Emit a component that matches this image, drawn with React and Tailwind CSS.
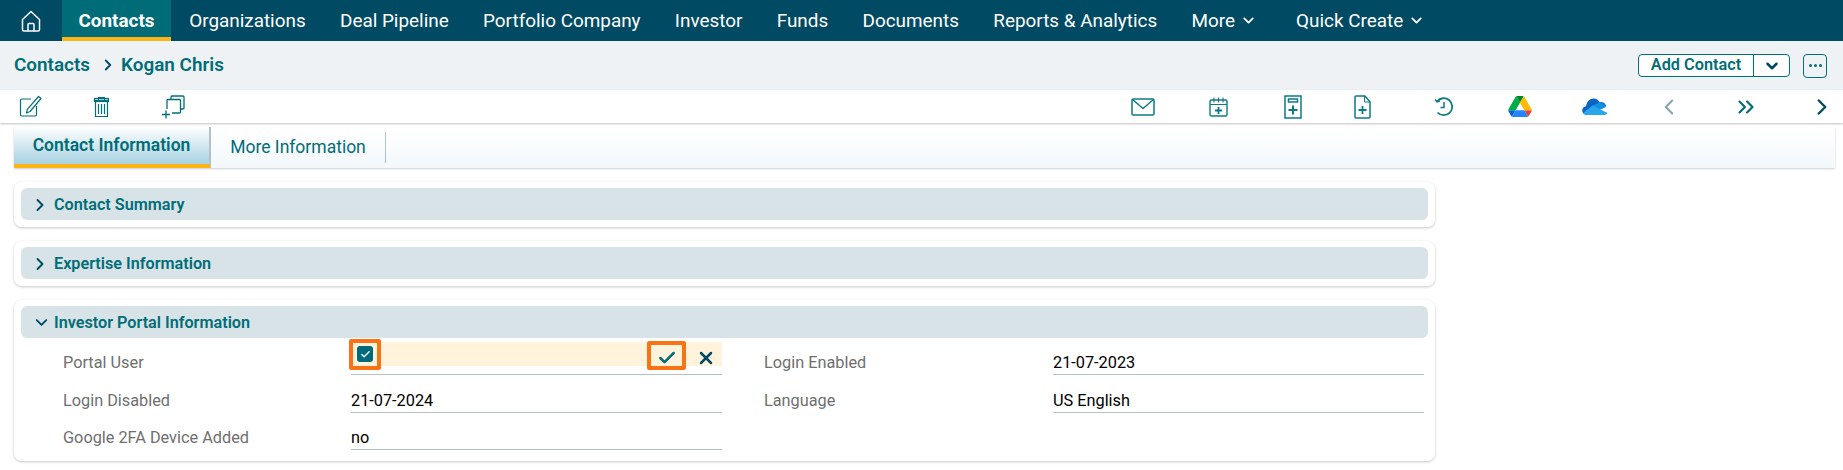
import { ChevronDown, ChevronRight, ChevronLeft, ChevronsRight, Check, X } from "lucide-react";

const navItems = ["Organizations", "Deal Pipeline", "Portfolio Company", "Investor", "Funds", "Documents", "Reports & Analytics"];

const HomeIcon = () => (
  <svg width="22" height="24" viewBox="0 0 22 24" fill="none" stroke="white" strokeWidth="1.5" strokeLinejoin="round">
    <path d="M11 2.5 2.5 10.5V20.5a1.5 1.5 0 0 0 1.5 1.5h14a1.5 1.5 0 0 0 1.5-1.5V10.5Z" />
    <path d="M8 22v-6.5a1 1 0 0 1 1-1h4a1 1 0 0 1 1 1V22" />
  </svg>
);

const EditIcon = () => (
  <svg width="23" height="23" viewBox="0 0 23 23" fill="none" stroke="#00707a" strokeWidth="1.2" strokeLinejoin="round">
    <path d="M12 4H3a1.5 1.5 0 0 0-1.5 1.5v14A1.5 1.5 0 0 0 3 21h13a1.5 1.5 0 0 0 1.5-1.5V11" />
    <path d="M19.5 1.5 22 3.5 11 16.5l-3.5 1.5.8-3.6Z" />
  </svg>
);

const TrashIcon = () => (
  <svg width="17" height="22" viewBox="0 0 17 22" fill="none" stroke="#00707a" strokeWidth="1.2">
    <path d="M1 4.5h15M5.5 4.5V1.5h6v3" />
    <rect x="1.5" y="2.5" width="14" height="3" fill="#00707a" fillOpacity=".25" />
    <path d="M2.5 5.5V20.5H14.5V5.5" />
    <path d="M5.5 8v10M8.5 8v10M11.5 8v10" />
  </svg>
);

const CopyIcon = () => (
  <svg width="24" height="24" viewBox="0 0 24 24" fill="none" stroke="#00707a" strokeWidth="1.3">
    <path d="M10 4.500V2a1 1 0 0 1 1-1h11a1 1 0 0 1 1 1v11a1 1 0 0 1-1 1h-2.500" />
    <path d="M6 14V5.500a1 1 0 0 1 1-1h11.500a1 1 0 0 1 1 1V17a1 1 0 0 1-1 1H11" />
    <path d="M5 15.500v8M1 19.500h8" />
  </svg>
);

const MailIcon = () => (
  <svg width="24" height="18" viewBox="0 0 24 18" fill="none" stroke="#0d7a85" strokeWidth="1.5" strokeLinejoin="round">
    <rect x="1" y="1" width="22" height="16" rx="1.2" />
    <path d="m1.500 1.500 10.500 9 10.500-9" />
  </svg>
);

const CalendarIcon = () => (
  <svg width="19" height="20" viewBox="0 0 19 20" fill="none" stroke="#0d7a85" strokeWidth="1.4">
    <rect x="1" y="3" width="17" height="16" rx="1.5" />
    <path d="M1 7.500h17M5 .5v5M9.500 .5v5M14 .5v5" strokeWidth="1.100" />
    <path d="M9.500 10v7M6 13.500h7" strokeWidth="1.800" />
  </svg>
);

const FormIcon = () => (
  <svg width="18" height="24" viewBox="0 0 18 24" fill="none" stroke="#0d7a85" strokeWidth="1.500">
    <rect x="1" y="1" width="16" height="22" />
    <rect x="4.500" y="4" width="9" height="3" />
    <path d="M9 10.500v9M4.500 15h9" strokeWidth="2" />
  </svg>
);

const FilePlusIcon = () => (
  <svg width="17" height="24" viewBox="0 0 17 24" fill="none" stroke="#0d7a85" strokeWidth="1.500" strokeLinejoin="round">
    <path d="M2 1h9l5 6v15a1 1 0 0 1-1 1H2a1 1 0 0 1-1-1V2a1 1 0 0 1 1-1Z" />
    <path d="M10.500 1v6H16" strokeWidth="1" />
    <path d="M8.500 11v8M4.500 15h8" strokeWidth="1.800" />
  </svg>
);

const HistoryIcon = () => (
  <svg width="20" height="20" viewBox="0 0 20 20" fill="none" stroke="#0d7a85" strokeWidth="1.800">
    <path d="M3 4.500A8.500 8.500 0 1 1 3.500 15.500" />
    <path d="M1 2.500 3 5l3-1" strokeWidth="1.400" />
    <path d="M10 5v5.500H6.500" strokeWidth="1.500" />
  </svg>
);

const DriveIcon = () => (
  <svg width="24" height="21" viewBox="0 0 87.300 78">
    <path d="m6.600 66.850 3.850 6.650c.8 1.400 1.950 2.500 3.300 3.300l13.750-23.800h-27.500c0 1.550.4 3.100 1.200 4.500z" fill="#0066da" />
    <path d="m43.650 25-13.750-23.800c-1.350.8-2.500 1.900-3.300 3.300l-25.400 44a9.060 9.060 0 0 0-1.200 4.500h27.500z" fill="#00ac47" />
    <path d="m73.550 76.800c1.350-.8 2.500-1.900 3.300-3.300l1.600-2.750 7.650-13.250c.8-1.400 1.200-2.950 1.200-4.500h-27.502l5.852 11.500z" fill="#ea4335" />
    <path d="m43.650 25 13.750-23.800c-1.350-.8-2.900-1.200-4.500-1.200h-18.500c-1.600 0-3.150.45-4.500 1.200z" fill="#00832d" />
    <path d="m59.800 53h-32.300l-13.750 23.800c1.350.8 2.900 1.200 4.500 1.200h50.800c1.600 0 3.150-.45 4.500-1.200z" fill="#2684fc" />
    <path d="m73.400 26.500-12.700-22c-.8-1.400-1.950-2.500-3.300-3.300l-13.750 23.800 16.150 28h27.450c0-1.550-.4-3.100-1.200-4.500z" fill="#ffba00" />
  </svg>
);

const OneDriveIcon = () => (
  <svg width="26" height="18" viewBox="0 0 26 18">
    <path d="M9.500 17H4.500C2 17 .2 15 .2 12.600c0-2.300 1.700-4.100 3.900-4.300C4.700 3.500 8 .5 11.500.5c2.700 0 5 1.500 6.200 3.700L12 9Z" fill="#0b63c4" />
    <path d="M17.700 4.200c.6-.1 1.200-.2 1.300-.2 2.900 0 4.900 2 5.200 4.600L14 11 10.500 7.500Z" fill="#0f7fd6" />
    <path d="M10.500 7.500c.8-.6 1.800-.8 2.700-.8l4.500-2.500L24.200 9 15 13Z" fill="#1490df" />
    <path d="M4.500 17c-1.200 0-2.700-.8-3.400-1.900L10.500 7.500l15 7.600c-.6 1.100-1.900 1.900-3.200 1.900Z" fill="#28a8ea" />
  </svg>
);

const Section = ({ title, open, children }) => (
  <div className="rounded-lg bg-white px-[7px] pt-[6px] pb-[7px] shadow-[0_1px_3px_rgba(0,0,0,0.22)]">
    <div className="flex h-[32px] items-center rounded-md bg-[#d8e3e8] pt-[1px] pl-[12px] text-[16.200px] font-semibold text-[#006d77]">
      <span className="flex w-[21px] items-center">
        {open ? (
          <ChevronDown size={19} strokeWidth={2.4} className="ml-[-1px] text-[#004a63]" />
        ) : (
          <ChevronRight size={20} strokeWidth={2.3} className="ml-[-3px] text-[#004a63]" />
        )}
      </span>
      {title}
    </div>
    {children}
  </div>
);

const Field = ({ label, value, height, children }) => (
  <>
    <div className={`flex w-[288px] items-end pb-[2px] text-[#6f6f6f] ${height}`}>{label}</div>
    <div className={`relative flex w-[371px] items-end border-b border-[#b4c1c8] pb-[1px] text-black ${height}`}>
      {children || value}
    </div>
  </>
);

export default function App() {
  return (
    <div className="h-[470px] w-full overflow-hidden bg-white font-['Roboto',sans-serif] text-[16.300px] leading-5">
      <div className="flex h-[41px] items-stretch bg-[#004a63] text-[18.900px] text-white">
        <div className="flex w-[62px] items-center justify-center">
          <HomeIcon />
        </div>
        <div className="flex w-[109px] items-center justify-center border-b-4 border-[#fdb515] bg-[#006c77] pt-1 font-bold">
          Contacts
        </div>
        <div className="flex items-center pl-[1px]">
          {navItems.map((item) => (
            <div key={item} className="px-[17.170px]">
              {item}
            </div>
          ))}
          <div className="flex items-center pl-[17.170px]">
            More
            <ChevronDown size={17} strokeWidth={2.6} className="ml-[5px]" />
          </div>
          <div className="ml-[39px] flex items-center">
            Quick Create
            <ChevronDown size={17} strokeWidth={2.6} className="ml-[5px]" />
          </div>
        </div>
      </div>

      <div className="flex h-[49px] items-center justify-between bg-[#eef2f5] pr-[16px] pl-[14px] font-semibold text-[#006d77]">
        <div className="mt-[-2px] flex items-center text-[18.900px]">
          Contacts
          <ChevronRight size={18} strokeWidth={2.4} className="mr-[4px] ml-[9px] text-[#004a63]" />
          Kogan Chris
        </div>
        <div className="flex items-center">
          <div className="flex h-[23px] w-[152px] rounded-[4px] border border-[#00707a] bg-white text-[16.300px]">
            <div className="flex w-[114px] items-center justify-center pb-[1px]">Add Contact</div>
            <div className="flex flex-1 items-center justify-center border-l border-[#00707a]">
              <ChevronDown size={18} strokeWidth={3.4} className="text-[#004a63]" />
            </div>
          </div>
          <div className="ml-[13px] flex h-[24px] w-[24px] items-center justify-center rounded-[4px] border border-[#00707a] text-[#00707a]">
            <span className="flex gap-[2px]">
              <i className="h-[3px] w-[3px] rounded-full bg-[#00707a]" />
              <i className="h-[3px] w-[3px] rounded-full bg-[#00707a]" />
              <i className="h-[3px] w-[3px] rounded-full bg-[#00707a]" />
            </span>
          </div>
        </div>
      </div>

      <div className="flex h-[33px] items-center justify-between pr-[8px] pl-[19px] shadow-[0_1px_2px_rgba(0,0,0,0.25)]">
        <div className="flex items-center">
          <EditIcon />
          <span className="ml-[51px]"><TrashIcon /></span>
          <span className="ml-[51px]"><CopyIcon /></span>
        </div>
        <div className="flex items-center">
          <MailIcon />
          <span className="ml-[54px]"><CalendarIcon /></span>
          <span className="ml-[56px]"><FormIcon /></span>
          <span className="ml-[52px]"><FilePlusIcon /></span>
          <span className="ml-[63px]"><HistoryIcon /></span>
          <span className="ml-[54px]"><DriveIcon /></span>
          <span className="ml-[50px]"><OneDriveIcon /></span>
          <ChevronLeft size={26} strokeWidth={1.8} className="ml-[48px] text-[#7fa3b1]" />
          <ChevronsRight size={26} strokeWidth={2} className="ml-[51px] text-[#006d77]" />
          <ChevronRight size={26} strokeWidth={2.2} className="ml-[50px] text-[#004a63]" />
        </div>
      </div>

      <div className="mt-[4px] mr-[8px] ml-[14px] flex h-[41px] items-stretch bg-gradient-to-b from-white to-[#f3f8fc] shadow-[0_1px_2px_rgba(0,0,0,0.2)]">
        <div className="flex w-[197px] items-center justify-center border-r-2 border-b-4 border-r-[#b4c1c8] border-b-[#fdb515] bg-gradient-to-b from-white to-[#a6d1e1] pb-[1px] text-[17.500px] font-semibold text-[#006d77]">
          Contact Information
        </div>
        <div className="my-[5px] flex w-[175px] items-center justify-center border-r border-[#b4c1c8] pb-[2px] text-[17.500px] text-[#006d77]">
          More Information
        </div>
      </div>

      <div className="mt-[14px] ml-[14px] flex w-[1421px] flex-col gap-[14px]">
        <Section title="Contact Summary" />
        <Section title="Expertise Information" />
        <Section title="Investor Portal Information" open>
          <div className="mt-[4px] grid grid-cols-[288px_371px_42px_289px_371px] pl-[42px]">
            <Field label="Portal User" height="h-[33px]">
              <div className="absolute top-0 right-0 left-0 flex h-[24px] items-center justify-between bg-[#fff3dc] pr-[6px] pl-[6px]">
                <span className="flex h-4 w-4 items-center justify-center rounded-[3px] bg-[#00697a]">
                  <Check size={11} strokeWidth={3} className="text-white" />
                </span>
                <span className="flex items-center gap-[19px] pt-[8px]">
                  <Check size={20} strokeWidth={3} className="text-[#006d77]" />
                  <X size={20} strokeWidth={3} className="text-[#004a63]" />
                </span>
              </div>
              <div className="absolute top-[-3px] left-[-2px] h-[31px] w-[32px] rounded-[2px] border-4 border-[#f97316]" />
              <div className="absolute top-[-1px] left-[296px] h-[29px] w-[39px] rounded-[2px] border-4 border-[#f97316]" />
            </Field>
            <div />
            <Field label="Login Enabled" value="21-07-2023" height="h-[33px]" />
            <Field label="Login Disabled" value="21-07-2024" height="h-[38px]" />
            <div />
            <Field label="Language" value="US English" height="h-[38px]" />
            <Field label="Google 2FA Device Added" value="no" height="h-[37px]" />
          </div>
          <div className="h-[4px]" />
        </Section>
      </div>
    </div>
  );
}
